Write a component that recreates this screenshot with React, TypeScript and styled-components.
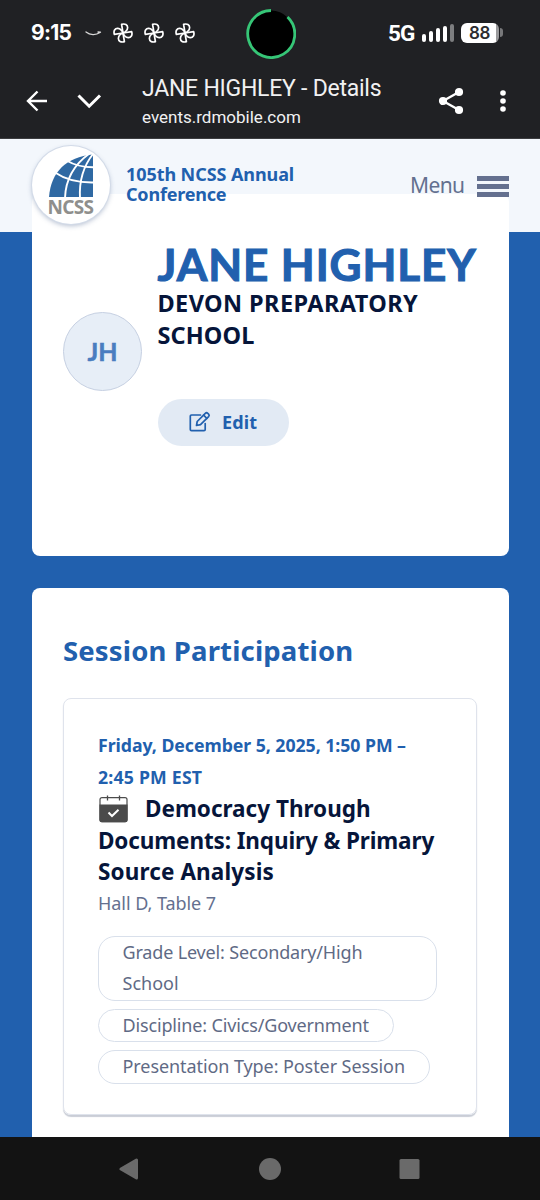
import React from 'react';
import styled, { createGlobalStyle } from 'styled-components';

const GlobalStyle = createGlobalStyle`
  * { box-sizing: border-box; }
  body { margin: 0; background: #2160ae; font-family: "Noto Sans", "Open Sans", sans-serif; }
`;

const Screen = styled.div`
  width: 540px;
  height: 1200px;
  display: flex;
  flex-direction: column;
  overflow: hidden;
`;

/* One line of text; $gap is its letter spacing */
const Line = styled.span<{ $gap?: number }>`
  display: block;
  white-space: nowrap;
  letter-spacing: ${(p) => p.$gap ?? 0}px;
`;

/* ---------- phone status bar ---------- */
const StatusBar = styled.div`
  height: 66px;
  flex: none;
  display: flex;
  align-items: center;
  padding: 0 37px 1px 31px;
  background: #202124;
  color: #fff;
`;
const Clock = styled.div`
  width: 54px;
  font: 700 21px/24px Inter, sans-serif;
  letter-spacing: -0.7px;
`;
const Notifications = styled.div`
  display: flex;
  align-items: center;
  gap: 11px;
  flex: 1;
`;
const Camera = styled.div`
  width: 50px;
  height: 50px;
  margin-top: 3px;
  margin-right: 92px;
`;
const Network = styled.div`
  font: 700 22.5px/24px Roboto, sans-serif;
  letter-spacing: -0.8px;
  width: 33.5px;
`;
const Signal = styled.div`
  display: flex;
  align-items: flex-end;
  gap: 3px;
  height: 18px;
  width: 39.5px;
`;
const Bar = styled.i<{ $h: number; $dim?: boolean }>`
  width: 4px;
  height: ${(p) => p.$h}px;
  border-radius: 2px;
  background: ${(p) => (p.$dim ? '#7d7e80' : '#fff')};
`;
const Battery = styled.div`
  display: flex;
  align-items: center;
  gap: 1px;
`;
const BatteryBody = styled.div`
  width: 38px;
  height: 20px;
  border-radius: 6px;
  background: linear-gradient(90deg, #fff 35px, #9a9a9c 35px);
  color: #2b2c2f;
  font: 600 17px/20px Inter, sans-serif;
  padding-left: 8px;
  letter-spacing: -0.3px;
`;
const BatteryTip = styled.i`
  width: 3px;
  height: 9px;
  border-radius: 0 3px 3px 0;
  background: #77787a;
`;

/* ---------- browser bar ---------- */
const BrowserBar = styled.div`
  height: 73px;
  flex: none;
  display: flex;
  align-items: center;
  padding: 0 34px 2px 25px;
  background: #202124;
  border-bottom: 1px solid #3c3d40;
  color: #f1f1f2;
  font-family: Roboto, sans-serif;
`;
const PageInfo = styled.div`
  margin: 1px auto 0 40px;
`;
const PageTitle = styled(Line)`
  font-size: 23px;
  line-height: 30px;
`;
const PageUrl = styled(Line)`
  font-size: 17px;
  line-height: 26px;
`;

/* ---------- site ---------- */
const Site = styled.main`
  height: 997.7px;
  flex: none;
  overflow: hidden;
  background: linear-gradient(#f3f7fc 93px, #2160ae 93px);
`;
const SiteHeader = styled.header`
  position: relative;
  z-index: 1;
  height: 93px;
  display: flex;
  align-items: flex-start;
  padding: 7px 31.5px 0 32px;
`;
const Logo = styled.div`
  width: 78px;
  height: 78px;
  border-radius: 50%;
  background: #fff;
  box-shadow: 0 0 0 1px #d3dbe8, 0 2px 5px rgba(40, 70, 120, 0.35);
`;
const Brand = styled.div`
  margin: 18px auto 0 16px;
  color: #2160ae;
  font-weight: 700;
  font-size: 18px;
  line-height: 20.4px;
`;
const MenuButton = styled.div`
  display: flex;
  align-items: center;
  margin-top: 25px;
  height: 29px;
  color: #64708f;
  font-size: 21px;
  line-height: 29px;
`;
const Burger = styled.div`
  width: 31.5px;
  height: 21px;
  margin: 2px 0 0 12.5px;
  display: flex;
  flex-direction: column;
  justify-content: space-between;
`;
const BurgerBar = styled.i`
  height: 5px;
  background: #64708f;
`;

const Card = styled.section`
  margin: 0 31.5px;
  background: #fff;
  border-radius: 8px;
`;
const Profile = styled(Card)`
  margin-top: -38px;
  height: 362.3px;
  padding: 47px 0 0 31.5px;
  display: flex;
`;
const Avatar = styled.div`
  width: 79px;
  height: 79px;
  margin: 70.7px 15.5px 0 0;
  border: 1px solid #c6d0e2;
  border-radius: 50%;
  background: #e7eef7;
  color: #4a7dc0;
  font: 700 25px/77px Lato, sans-serif;
  -webkit-text-stroke: 0.5px #4a7dc0;
  text-align: center;
`;
const Name = styled.h1`
  margin: 0;
  color: #2160ae;
  font: 700 44px/46px Lato, sans-serif;
  -webkit-text-stroke: 1.1px #2160ae;
`;
const School = styled.div`
  margin-top: 1px;
  color: #06153a;
  font-weight: 700;
  font-size: 23.5px;
  line-height: 31.5px;
`;
const EditButton = styled.div`
  display: flex;
  align-items: center;
  width: 131.5px;
  height: 47px;
  margin-top: 47.5px;
  padding-left: 31px;
  gap: 11.5px;
  border-radius: 24px;
  background: #e2eaf4;
  color: #2160ae;
  font-weight: 700;
  font-size: 18px;
`;

const Participation = styled(Card)`
  margin-top: 31.5px;
  height: 620px;
  padding: 45px 31.2px 0 31.5px;
`;
const SectionTitle = styled.h2`
  margin: 0 0 29px;
  color: #2160ae;
  font-size: 27.5px;
  line-height: 36px;
`;
const Session = styled.article`
  height: 417.5px;
  padding: 31.5px 33px 0 34px;
  border: 1.5px solid #dfe3ec;
  border-radius: 8px;
  box-shadow: 0 2px 1px #c9cdd6;
  line-height: 31.5px;
`;
const When = styled.div`
  color: #2160ae;
  font-weight: 700;
  font-size: 17.7px;
`;
const SessionTitle = styled.h3`
  margin: 0;
  color: #06153a;
  font-size: 22.5px;
`;
const TitleStart = styled.span`
  display: flex;
  align-items: center;
  gap: 16px;
`;
const Place = styled.div`
  color: #64708f;
  font-size: 18px;
`;
const Tags = styled.div`
  display: flex;
  flex-direction: column;
  align-items: flex-start;
  gap: 8px;
  margin-top: 16.3px;
`;
const Tag = styled.div<{ $w: number }>`
  width: ${(p) => p.$w}px;
  padding-left: 23.5px;
  border: 1px solid #d9e0eb;
  border-radius: 17px;
  color: #5f6a85;
  font-size: 18px;
`;

/* ---------- phone navigation ---------- */
const NavBar = styled.nav`
  flex: 1;
  display: flex;
  align-items: center;
  justify-content: center;
  gap: 118px;
  padding-top: 1px;
  background: #131313;
`;

const Pinwheel = () => (
  <svg width="20" height="20" viewBox="0 0 20 20" fill="none" stroke="#fff" strokeWidth="1.7" strokeLinejoin="round">
    {[0, 90, 180, 270].map((a) => (
      <path key={a} transform={`rotate(${a} 10 10)`} d="M10 10L8.600 1.400C12 .2 14.800 2 14.600 4.800C14.400 7.400 12.600 9 10 10Z" />
    ))}
  </svg>
);

const NcssLogo = () => (
  <svg width="78" height="78" viewBox="0 0 78 78">
    <path d="M17 51C19 26 34 11 61 8.500V51Z" fill="#2f69a3" />
    <g fill="none" stroke="#fff" strokeWidth="1.900">
      <path d="M33 52C33.500 36 40 20 57.500 7.500" />
      <path d="M48 52C47 34 51.500 20 61 8" />
      <path d="M23 26.500C34 34 48 36.800 62 36.500" />
      <path d="M34.500 14.500C43 19.500 51 21.500 62 21.300" />
    </g>
    <text x="15.500" y="67.500" textLength="46.500" fontFamily="Noto Sans, sans-serif" fontWeight="700" fontSize="19" fill="#8f8f8d">NCSS</text>
  </svg>
);

export default function App() {
  return (
    <Screen>
      <GlobalStyle />
      <StatusBar>
        <Clock>9:15</Clock>
        <Notifications>
          <svg width="17" height="8" viewBox="0 0 17 8" fill="none" stroke="#d8d8d8" strokeWidth="1.300" strokeLinecap="round">
            <path d="M1 3C5 6.300 11 6.300 15 3.500M13 3L15.500 3.200" />
          </svg>
          <Pinwheel />
          <Pinwheel />
          <Pinwheel />
        </Notifications>
        <Camera>
          <svg width="50" height="50" viewBox="0 0 50 50">
            <circle cx="25" cy="25" r="23.500" fill="#000" />
            <path d="M41.500 8A23.500 23.500 0 1 1 25 1.500" fill="none" stroke="#36c677" strokeWidth="2.800" />
          </svg>
        </Camera>
        <Network>5G</Network>
        <Signal>
          <Bar $h={8} />
          <Bar $h={11} />
          <Bar $h={14} />
          <Bar $h={16} />
          <Bar $h={18} $dim />
        </Signal>
        <Battery>
          <BatteryBody>88</BatteryBody>
          <BatteryTip />
        </Battery>
      </StatusBar>

      <BrowserBar>
        <svg width="24" height="24" viewBox="0 0 24 24" fill="none" stroke="#fff" strokeWidth="2.400">
          <path d="M22 12H3.500M12.500 2.500L3 12L12.500 21.500" />
        </svg>
        <svg width="26" height="24" viewBox="0 0 26 24" fill="none" stroke="#fff" strokeWidth="3" style={{ marginLeft: 27 }}>
          <path d="M2.500 6.500L13.200 17.200L24 6.500" />
        </svg>
        <PageInfo>
          <PageTitle $gap={-0.25}>JANE HIGHLEY - Details</PageTitle>
          <PageUrl>events.rdmobile.com</PageUrl>
        </PageInfo>
        <svg width="26" height="28" viewBox="0 0 26 28" fill="#fff" stroke="#fff" strokeWidth="2.400">
          <path d="M21 5L5 14L21 23" fill="none" />
          <circle cx="21" cy="5" r="2.900" />
          <circle cx="5" cy="14" r="2.900" />
          <circle cx="21" cy="23" r="2.900" />
        </svg>
        <svg width="6" height="24" viewBox="0 0 6 24" fill="#fff" style={{ marginLeft: 36 }}>
          <circle cx="3" cy="4" r="2.800" />
          <circle cx="3" cy="12" r="2.800" />
          <circle cx="3" cy="20" r="2.800" />
        </svg>
      </BrowserBar>

      <Site>
        <SiteHeader>
          <Logo><NcssLogo /></Logo>
          <Brand>
            <Line $gap={-0.08}>105th NCSS Annual</Line>
            <Line $gap={-0.2}>Conference</Line>
          </Brand>
          <MenuButton>
            <Line $gap={-0.6}>Menu</Line>
            <Burger><BurgerBar /><BurgerBar /><BurgerBar /></Burger>
          </MenuButton>
        </SiteHeader>

        <Profile>
          <Avatar>JH</Avatar>
          <div>
            <Name><Line $gap={0.9}>JANE HIGHLEY</Line></Name>
            <School>
              <Line $gap={0.4}>DEVON PREPARATORY</Line>
              <Line $gap={0.1}>SCHOOL</Line>
            </School>
            <EditButton>
              <svg width="22" height="22" viewBox="0 0 22 22" fill="none" stroke="#2160ae" strokeWidth="1.700" strokeLinejoin="round" strokeLinecap="round">
                <path d="M11.500 4H2.500Q1.300 4 1.300 5.200V18.500Q1.300 19.700 2.500 19.700H15Q16.200 19.700 16.200 18.500V12.500" />
                <path d="M7.500 14.500L8.200 10.500L16.300 2.300Q17.500 1.200 18.800 2.300L19.600 3.100Q20.800 4.300 19.600 5.600L11.500 13.700Z" />
                <path d="M14.600 4.200L17.800 7.400" />
              </svg>
              <Line $gap={0.1}>Edit</Line>
            </EditButton>
          </div>
        </Profile>

        <Participation>
          <SectionTitle><Line $gap={0.15}>Session Participation</Line></SectionTitle>
          <Session>
            <When>
              <Line $gap={-0.04}>Friday, December 5, 2025, 1:50 PM –</Line>
              <Line $gap={0.2}>2:45 PM EST</Line>
            </When>
            <SessionTitle>
              <TitleStart>
                <svg width="31" height="28" viewBox="0 0 31 28">
                  <rect x="2" y="2.600" width="27" height="24" rx="2" fill="#fff" stroke="#4b4b4b" strokeWidth="1.200" />
                  <path d="M1.400 9.500H29.600V25Q29.600 27.200 27.400 27.200H3.600Q1.400 27.200 1.400 25Z" fill="#4b4b4b" />
                  <path d="M9.500 .5V5.500M21.500 .5V5.500" stroke="#4b4b4b" strokeWidth="1.300" />
                  <path d="M10.500 17.500L14 21L20.500 14.800" fill="none" stroke="#fff" strokeWidth="2" />
                </svg>
                <Line>Democracy Through</Line>
              </TitleStart>
              <Line $gap={-0.12}>Documents: Inquiry &amp; Primary</Line>
              <Line $gap={0.12}>Source Analysis</Line>
            </SessionTitle>
            <Place><Line $gap={-0.05}>Hall D, Table 7</Line></Place>
            <Tags>
              <Tag $w={338.5}>
                <Line $gap={-0.16}>Grade Level: Secondary/High</Line>
                <Line>School</Line>
              </Tag>
              <Tag $w={295.5}><Line $gap={-0.15}>Discipline: Civics/Government</Line></Tag>
              <Tag $w={331.5}><Line $gap={-0.08}>Presentation Type: Poster Session</Line></Tag>
            </Tags>
          </Session>
        </Participation>
      </Site>

      <NavBar>
        <svg width="22" height="24" viewBox="0 0 22 24" fill="#6a6a6a" stroke="#6a6a6a" strokeWidth="3" strokeLinejoin="round">
          <path d="M17.500 3V21L2 12Z" />
        </svg>
        <svg width="22" height="24" viewBox="0 0 22 24" fill="#6a6a6a"><circle cx="11" cy="12" r="11" /></svg>
        <svg width="22" height="24" viewBox="0 0 22 24" fill="#6a6a6a"><rect x="0.500" y="2" width="20" height="20" rx="1.500" /></svg>
      </NavBar>
    </Screen>
  );
}
